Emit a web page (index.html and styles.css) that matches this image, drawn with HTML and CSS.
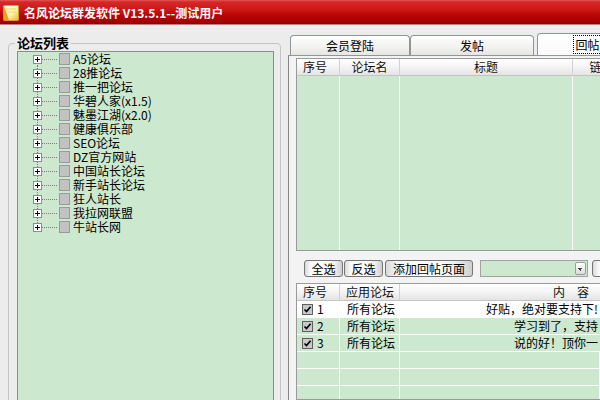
FILE: index.html
```html
<!DOCTYPE html>
<html lang="zh-CN">
<head>
<meta charset="utf-8">
<title>名风论坛群发软件</title>
<link rel="stylesheet" href="styles.css">
</head>
<body>
<div class="window">
  <div class="titlebar">
    <svg class="app-icon" width="16" height="16" viewBox="0 0 16 16">
      <defs>
        <linearGradient id="ig" x1="0" y1="0" x2="1" y2="1">
          <stop offset="0" stop-color="#fffef0"/>
          <stop offset="0.55" stop-color="#fff3b0"/>
          <stop offset="1" stop-color="#f2b020"/>
        </linearGradient>
      </defs>
      <rect x="0.5" y="0.5" width="15" height="15" rx="1" fill="url(#ig)" stroke="#d89a20"/>
      <path d="M1 1 L1 15 L6 15 Z" fill="#f0a020"/>
      <path d="M3 4 L13 4 M5 7 L13 7" stroke="#f5d060" stroke-width="1"/>
    </svg>
    <span class="title">名风论坛群发软件 V13.5.1--测试用户</span>
  </div>

  <div class="main">
    <fieldset class="group">
      <legend>论坛列表</legend>
      <div class="tree">
        <div class="node"><span class="twig"><span class="exp"></span></span><span class="dots"></span><span class="chk"></span><span class="lbl">A5论坛</span></div>
        <div class="node"><span class="twig"><span class="exp"></span></span><span class="dots"></span><span class="chk"></span><span class="lbl">28推论坛</span></div>
        <div class="node"><span class="twig"><span class="exp"></span></span><span class="dots"></span><span class="chk"></span><span class="lbl">推一把论坛</span></div>
        <div class="node"><span class="twig"><span class="exp"></span></span><span class="dots"></span><span class="chk"></span><span class="lbl">华碧人家(x1.5)</span></div>
        <div class="node"><span class="twig"><span class="exp"></span></span><span class="dots"></span><span class="chk"></span><span class="lbl">魅墨江湖(x2.0)</span></div>
        <div class="node"><span class="twig"><span class="exp"></span></span><span class="dots"></span><span class="chk"></span><span class="lbl">健康俱乐部</span></div>
        <div class="node"><span class="twig"><span class="exp"></span></span><span class="dots"></span><span class="chk"></span><span class="lbl">SEO论坛</span></div>
        <div class="node"><span class="twig"><span class="exp"></span></span><span class="dots"></span><span class="chk"></span><span class="lbl">DZ官方网站</span></div>
        <div class="node"><span class="twig"><span class="exp"></span></span><span class="dots"></span><span class="chk"></span><span class="lbl">中国站长论坛</span></div>
        <div class="node"><span class="twig"><span class="exp"></span></span><span class="dots"></span><span class="chk"></span><span class="lbl">新手站长论坛</span></div>
        <div class="node"><span class="twig"><span class="exp"></span></span><span class="dots"></span><span class="chk"></span><span class="lbl">狂人站长</span></div>
        <div class="node"><span class="twig"><span class="exp"></span></span><span class="dots"></span><span class="chk"></span><span class="lbl">我拉网联盟</span></div>
        <div class="node"><span class="twig"><span class="exp"></span></span><span class="dots"></span><span class="chk"></span><span class="lbl">牛站长网</span></div>
      </div>
    </fieldset>

    <div class="tabctrl">
      <div class="tabs">
        <div class="tab t1">会员登陆</div>
        <div class="tab t2">发帖</div>
        <div class="tab t3 active"><span class="focus">回帖页面</span></div>
      </div>
      <div class="page">
        <div class="grid top-grid">
          <div class="ghead cols4">
            <div class="hc left">序号</div>
            <div class="hc">论坛名</div>
            <div class="hc">标题</div>
            <div class="hc">链接</div>
          </div>
          <div class="gbody cols4">
            <div class="bc"></div><div class="bc"></div><div class="bc"></div><div class="bc"></div>
          </div>
        </div>

        <div class="toolbar">
          <button class="btn w39">全选</button>
          <button class="btn w39 g1">反选</button>
          <button class="btn w88 g2">添加回帖页面</button>
          <div class="combo"><span class="combo-field"></span><span class="combo-arrow"></span></div>
          <button class="btn w40 g4">添加</button>
        </div>

        <div class="grid bottom-grid">
          <div class="ghead cols3">
            <div class="hc left">序号</div>
            <div class="hc left pad7">应用论坛</div>
            <div class="hc right">内　容</div>
          </div>
          <div class="grow cols3 sel">
            <div class="rc num"><span class="cb"><svg width="11" height="11" viewBox="0 0 11 11"><rect x="0.5" y="0.5" width="10" height="10" fill="#c9c9c9" stroke="#5e5e5e"/><path d="M2.5 5.5 L4.5 7.6 L8.6 2.8" fill="none" stroke="#000" stroke-width="1.7"/></svg></span>1</div>
            <div class="rc pad7">所有论坛</div>
            <div class="rc content">好贴，绝对要支持下!</div>
          </div>
          <div class="grow cols3">
            <div class="rc num"><span class="cb"><svg width="11" height="11" viewBox="0 0 11 11"><rect x="0.5" y="0.5" width="10" height="10" fill="#c9c9c9" stroke="#5e5e5e"/><path d="M2.5 5.5 L4.5 7.6 L8.6 2.8" fill="none" stroke="#000" stroke-width="1.7"/></svg></span>2</div>
            <div class="rc pad7">所有论坛</div>
            <div class="rc content">学习到了，支持</div>
          </div>
          <div class="grow cols3">
            <div class="rc num"><span class="cb"><svg width="11" height="11" viewBox="0 0 11 11"><rect x="0.5" y="0.5" width="10" height="10" fill="#c9c9c9" stroke="#5e5e5e"/><path d="M2.5 5.5 L4.5 7.6 L8.6 2.8" fill="none" stroke="#000" stroke-width="1.7"/></svg></span>3</div>
            <div class="rc pad7">所有论坛</div>
            <div class="rc content">说的好！顶你一</div>
          </div>
          <div class="grow cols3"><div class="rc"></div><div class="rc"></div><div class="rc"></div></div>
          <div class="grow cols3"><div class="rc"></div><div class="rc"></div><div class="rc"></div></div>
          <div class="grow cols3"><div class="rc"></div><div class="rc"></div><div class="rc"></div></div>
          <div class="grow cols3"><div class="rc"></div><div class="rc"></div><div class="rc"></div></div>
        </div>
      </div>
    </div>
  </div>
</div>
</body>
</html>
```

FILE: styles.css
```css
* { box-sizing: border-box; }

html, body {
  margin: 0;
  padding: 0;
}

body {
  width: 600px;
  height: 400px;
  overflow: hidden;
  background: #ececec;
  font-family: "Noto Sans CJK SC", "Noto Sans", sans-serif;
  font-size: 12px;
  color: #000;
}

.window {
  width: 600px;
  height: 400px;
  display: flex;
  flex-direction: column;
  overflow: hidden;
}

/* ---------- title bar ---------- */
.titlebar {
  flex: none;
  height: 25px;
  display: flex;
  align-items: center;
  gap: 5px;
  padding-left: 3px;
  padding-top: 1px;
  background: linear-gradient(#e25656 0, #d52828 8%, #cc1616 40%, #b90707 58%, #a60000 86%, #900000 95%, #d8d8d8 100%);
}

.app-icon { flex: none; display: block; }

.title {
  color: #fff;
  font-weight: bold;
  font-size: 12px;
  line-height: 14px;
  white-space: nowrap;
}

/* ---------- main ---------- */
.main {
  flex: 1;
  min-height: 0;
  display: flex;
}

/* ---------- left group ---------- */
.group {
  flex: none;
  width: 273px;
  height: 380px;
  margin: 10px 0 0 8px;
  padding: 0 6px 0 8px;
  border: 1px solid #c4c4c4;
  border-radius: 4px;
  min-width: 0;
  display: flex;
  flex-direction: column;
}

.group legend {
  padding: 0 2px;
  margin-left: -2px;
  font-weight: bold;
  font-size: 13px;
  line-height: 16px;
  color: #000;
}

.tree {
  flex: 1;
  border: 1px solid #8c8c8c;
  background: #cce8cf;
  padding-top: 0;
}

.node {
  display: flex;
  align-items: center;
  height: 14px;
  padding-left: 15px;
  white-space: nowrap;
}

.twig {
  flex: none;
  width: 9px;
  height: 14px;
  display: flex;
  align-items: center;
  background-image: repeating-linear-gradient(#7a7a7a 0 1px, transparent 1px 2px);
  background-size: 1px 100%;
  background-position: 4px 0;
  background-repeat: no-repeat;
}

.node:first-child .twig {
  background-size: 1px 50%;
  background-position: 4px 100%;
}

.node:last-child .twig {
  background-size: 1px 50%;
  background-position: 4px 0;
}

.exp {
  width: 9px;
  height: 9px;
  border: 1px solid #8c8c8c;
  background:
    linear-gradient(#000, #000) 1px 3px / 5px 1px no-repeat,
    linear-gradient(#000, #000) 3px 1px / 1px 5px no-repeat,
    #fff;
}

.dots {
  flex: none;
  width: 16px;
  height: 1px;
  background: repeating-linear-gradient(90deg, #7a7a7a 0 1px, transparent 1px 2px);
}

.chk {
  flex: none;
  width: 11px;
  height: 12px;
  margin-left: 1px;
  background: #c2c2c2;
  border: 1px solid #9a9a9a;
}

.lbl {
  margin-left: 3px;
  line-height: 14px;
}

/* ---------- tab control ---------- */
.tabctrl {
  flex: 1;
  min-width: 0;
  margin-left: 7px;
  display: flex;
  flex-direction: column;
}

.tabs {
  flex: none;
  height: 22px;
  margin-top: 8px;
  padding-left: 2px;
  display: flex;
  align-items: flex-end;
}

.tab {
  flex: none;
  height: 20px;
  border: 1px solid #8e969a;
  border-bottom: none;
  border-radius: 4px 4px 0 0;
  background: linear-gradient(#ffffff, #f1f1ef 60%, #e6e6e2);
  text-align: center;
  line-height: 19px;
  white-space: nowrap;
}

.t1 { width: 120px; }
.t2 { width: 124px; }
.t3 {
  width: 125px;
  height: 22px;
  margin-left: 3px;
  background: linear-gradient(#ffffff, #fafafa);
  line-height: 22px;
}

.focus {
  outline: 1px dotted #000;
  outline-offset: 0;
  padding: 0 1px;
}

.page {
  flex: 1;
  min-height: 0;
  border-left: 1px solid #858585;
  border-top: 1px solid #8e969a;
  background: #f3f3f3;
  padding: 2px 0 0 7px;
  display: flex;
  flex-direction: column;
}

/* ---------- grids ---------- */
.grid {
  flex: none;
  width: 330px;
  border: 1px solid #9a9a9a;
  background: #cce8cf;
  display: flex;
  flex-direction: column;
  overflow: hidden;
}

.top-grid { height: 193px; }
.bottom-grid { flex: 1; }

.cols4 { display: grid; grid-template-columns: 43px 60px 173px 58px; }
.cols3 { display: grid; grid-template-columns: 43px 60px 200px; }

.ghead {
  flex: none;
  height: 17px;
  background: linear-gradient(#ffffff, #f4f4f4 50%, #e4e4e4);
  border-bottom: 1px solid #c4c4c4;
}

.hc {
  border-right: 1px solid #d2d2d2;
  line-height: 16px;
  text-align: center;
  color: #111;
  white-space: nowrap;
  overflow: hidden;
}

.hc.left { text-align: left; padding-left: 6px; }
.hc.right { text-align: right; padding-right: 11px; border-right: none; }
.pad7 { padding-left: 7px; text-align: left; }

.gbody { flex: 1; }
.bc { border-right: 1px solid #ffffff; }

.grow {
  flex: none;
  height: 17px;
  border-bottom: 1px solid #ffffff;
}

.grow.sel { background: #ffffff; }

.rc {
  border-right: 1px solid #ffffff;
  line-height: 16px;
  white-space: nowrap;
  overflow: hidden;
}

.rc.num {
  display: flex;
  align-items: center;
  padding-left: 5px;
  gap: 4px;
}

.cb { display: flex; }
.cb svg { display: block; }

.rc.content {
  text-align: right;
  padding-right: 2px;
  border-right: none;
}

/* ---------- toolbar ---------- */
.toolbar {
  flex: none;
  height: 17px;
  margin: 9px 0 6px 8px;
  display: flex;
  align-items: center;
}

.btn {
  flex: none;
  height: 17px;
  padding: 0;
  border: 1px solid #767676;
  border-radius: 3px;
  background: linear-gradient(90deg, #d9d9d9 0, #f8f8f8 14%, #ffffff 55%, #f0f0f0 80%, #cfcfcf 100%);
  font-family: inherit;
  font-size: 12px;
  line-height: 15px;
  color: #000;
  text-align: center;
  white-space: nowrap;
}

.w39 { width: 39px; }
.w88 { width: 88px; }
.w40 { width: 40px; }
.g1 { margin-left: 1px; }
.g2 { margin-left: 2px; }
.g4 { margin-left: 4px; }

.combo {
  flex: none;
  width: 108px;
  height: 17px;
  margin-left: 7px;
  border: 1px solid #a2a2a2;
  background: #cce8cf;
  display: flex;
  align-items: center;
  padding-right: 1px;
}

.combo-field { flex: 1; }

.combo-arrow {
  flex: none;
  width: 11px;
  height: 13px;
  border: 1px solid #9c9c9c;
  border-radius: 2px;
  background:
    linear-gradient(45deg, transparent 50%, #444 50%) 2px 5px / 3px 3px no-repeat,
    linear-gradient(-45deg, transparent 50%, #444 50%) 4px 5px / 3px 3px no-repeat,
    linear-gradient(#ffffff, #dcdcdc);
}
```
